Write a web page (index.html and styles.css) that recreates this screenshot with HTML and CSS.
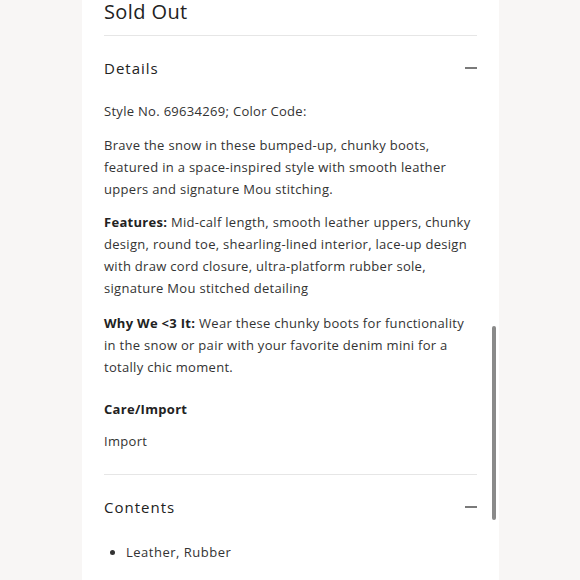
FILE: index.html
```html
<!DOCTYPE html>
<html>
<head>
<meta charset="utf-8">
<link rel="stylesheet" href="styles.css">
</head>
<body>
<div class="page">
  <div class="panel">
    <div class="status">Sold Out</div>
    <div class="section">
      <div class="section-head"><span class="section-title">Details</span><span class="minus"></span></div>
      <div class="section-body">
        <p class="p-style">Style No. 69634269; Color Code:</p>
        <p>Brave the snow in these bumped-up, chunky boots, featured in a space-inspired style with smooth leather uppers and signature Mou stitching.</p>
        <p><b>Features:</b> Mid-calf length, smooth leather uppers, chunky design, round toe, shearling-lined interior, lace-up design with draw cord closure, ultra-platform rubber sole, signature Mou stitched detailing</p>
        <p class="p-why"><b>Why We &lt;3 It:</b> Wear these chunky boots for functionality in the snow or pair with your favorite denim mini for a totally chic moment.</p>
        <p class="care-title"><b>Care/Import</b></p>
        <p class="care">Import</p>
      </div>
    </div>
    <div class="section last">
      <div class="section-head"><span class="section-title">Contents</span><span class="minus"></span></div>
      <ul class="list">
        <li>Leather, Rubber</li>
      </ul>
    </div>
    <div class="scrollbar"></div>
  </div>
</div>
</body>
</html>
```

FILE: styles.css
```css
html, body {
  margin: 0;
  padding: 0;
  height: 580px;
  overflow: hidden;
}
body {
  background: #f8f6f5;
  font-family: "Open Sans", "Liberation Sans", sans-serif;
  color: #333;
}
.page {
  display: flex;
  height: 580px;
}
.panel {
  position: relative;
  margin-left: 82px;
  width: 373px;
  padding: 0 22px;
  background: #fff;
  height: 580px;
}
.status {
  font-size: 20px;
  line-height: 24px;
  color: #222;
  letter-spacing: 0.4px;
  padding-top: 0;
  padding-bottom: 11px;
  border-bottom: 1px solid #e6e6e6;
}
.section {
  border-bottom: 1px solid #e6e6e6;
}
.section.last {
  border-bottom: none;
}
.section-head {
  display: flex;
  align-items: center;
  justify-content: space-between;
  height: 64px;
}
.section-title {
  font-size: 15px;
  letter-spacing: 1px;
  color: #222;
}
.minus {
  width: 12px;
  height: 1.5px;
  background: #7a7a7a;
}
.section-body {
  padding-bottom: 11px;
}
.section-body p {
  margin: 0 0 11px 0;
  font-size: 13px;
  line-height: 22px;
  letter-spacing: 0.3px;
}
.section-body p.p-style {
  margin-top: 0;
  margin-bottom: 12px;
}
.section-body p.p-why {
  margin-top: 13px;
}
.section-body b {
  font-weight: 700;
  color: #222;
}
.section-body p.care-title {
  margin-top: 20px;
  margin-bottom: 10px;
}
.list {
  margin: 0;
  padding: 0 0 0 22px;
  font-size: 13px;
  line-height: 22px;
  letter-spacing: 0.5px;
  list-style: disc;
}
.list li {
  padding-top: 2px;
}
.scrollbar {
  position: absolute;
  left: 410px;
  top: 326px;
  width: 4px;
  height: 194px;
  border-radius: 2px;
  background: #8a8a8a;
}
```
